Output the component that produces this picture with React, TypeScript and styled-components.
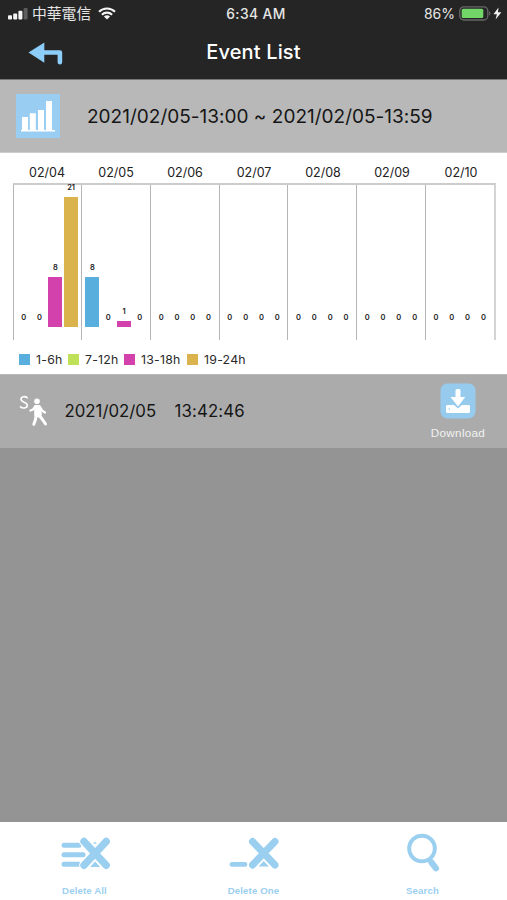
import React from "react";
import styled, { createGlobalStyle } from "styled-components";

const GlobalStyle = createGlobalStyle`
  * { box-sizing: border-box; }
  body { margin: 0; background: #949494; font-family: Inter, "Noto Sans CJK TC", sans-serif; }
`;

const BLUE = "#9bcff0";

const Screen = styled.div`
  width: 507px;
  height: 900px;
  display: flex;
  flex-direction: column;
  overflow: hidden;
  background: #949494;
`;

const StatusBar = styled.div`
  height: 28px;
  flex: none;
  display: grid;
  grid-template-columns: 1fr auto 1fr;
  align-items: center;
  padding: 0 5px 0 8px;
  background: #252525;
  color: #e6e6e6;
  white-space: nowrap;
`;

const StatusGroup = styled.div<{ $end?: boolean }>`
  display: flex;
  align-items: center;
  justify-content: ${(p) => (p.$end ? "flex-end" : "flex-start")};
`;

const Carrier = styled.span`
  font: 400 14.8px/26px "Noto Sans CJK TC", sans-serif;
  margin: 0 7px 2px 4px;
`;

const Clock = styled.span`
  font-size: 13.8px;
  font-weight: 500;
  letter-spacing: 0.4px;
  margin-left: 2px;
`;

const Percent = styled.span`
  font-size: 14px;
  line-height: 26px;
  margin: 0 4px 1px 0;
`;

const NavBar = styled.header`
  height: 51px;
  flex: none;
  display: grid;
  grid-template-columns: 90px 1fr 90px;
  align-items: center;
  padding-bottom: 3px;
  background: #252525;
`;

const BackButton = styled.button`
  border: 0;
  padding: 1px 0 0 28px;
  background: none;
  display: flex;
`;

const Title = styled.h1`
  margin: 0;
  color: #fff;
  font-size: 20px;
  font-weight: 500;
  letter-spacing: 0.15px;
  text-align: center;
`;

const Summary = styled.div`
  height: 74px;
  flex: none;
  display: flex;
  align-items: center;
  padding-left: 16px;
  gap: 27px;
  border-top: 1px solid #777;
  border-bottom: 1px solid #ccc;
  background: #b8b8b8;
  color: #151515;
  font-size: 19px;
  letter-spacing: 0.01px;
  white-space: nowrap;
`;

const ChartPanel = styled.section`
  height: 221px;
  flex: none;
  background: #fff;
  padding: 10px 11.5px 0 12.5px;
`;

const DayLabels = styled.div`
  display: grid;
  grid-template-columns: repeat(7, 1fr);
  height: 20px;
  line-height: 19px;
  font-size: 12.5px;
  text-align: center;
  color: #222;
`;

const Plot = styled.div`
  display: grid;
  grid-template-columns: repeat(7, 1fr);
  grid-template-rows: 100%;
  height: 157px;
  border-top: 2px solid #ccc;
  border-right: 2px solid #d4d4d4;
`;

const Day = styled.div`
  display: flex;
  align-items: flex-end;
  gap: 1.8px;
  padding: 0 0 13px 3.2px;
  border-left: 1px solid #b5b5b5;
`;

const Slot = styled.div`
  width: 14px;
  display: flex;
  flex-direction: column;
  align-items: center;
`;

const Value = styled.span`
  font: 600 7.5px/10px Inter, sans-serif;
  color: #222;
  margin-bottom: 4px;
`;

const Bar = styled.div<{ $color: string; $height: number }>`
  width: 14px;
  height: ${(p) => p.$height}px;
  background: ${(p) => p.$color};
`;

const Legend = styled.div`
  display: flex;
  align-items: center;
  height: 18px;
  margin: 10px 0 0 6.5px;
  font-size: 12.3px;
  letter-spacing: 0.25px;
  color: #2a2a2a;
`;

const LegendItem = styled.div<{ $width: number }>`
  display: flex;
  align-items: center;
  gap: 6px;
  width: ${(p) => p.$width}px;
  white-space: nowrap;
`;

const Swatch = styled.i<{ $color: string }>`
  width: 11px;
  height: 11px;
  background: ${(p) => p.$color};
`;

const EventRow = styled.div`
  height: 74px;
  flex: none;
  display: flex;
  align-items: center;
  padding: 0 17px 1px 19px;
  background: #ababab;
  border-top: 1px solid #b8b8b8;
  color: #151515;
  font-size: 16.8px;
`;

const EventDate = styled.span`
  width: 110px;
  margin-left: 16.500px;
`;

const EventTime = styled.span`
  flex: 1;
  letter-spacing: 0.15px;
`;

const DownloadButton = styled.button`
  border: 0;
  padding: 0;
  background: none;
  width: 64px;
  display: flex;
  flex-direction: column;
  align-items: center;
  gap: 7px;
  color: #f2f2f2;
  font: 400 11.7px/14px "Liberation Sans", sans-serif;
  letter-spacing: 0.3px;
`;

const Empty = styled.main`
  flex: 1;
`;

const Footer = styled.footer`
  height: 78px;
  flex: none;
  display: grid;
  grid-template-columns: repeat(3, 1fr);
  background: #fff;
`;

const FooterButton = styled.button`
  border: 0;
  padding: 9px 0 0;
  background: none;
  display: flex;
  flex-direction: column;
  align-items: center;
  gap: 9px;
  color: ${BLUE};
  font: 700 9.6px/14px "Liberation Sans", sans-serif;
  letter-spacing: 0.15px;
`;

const series = [
  { label: "1-6h", color: "#58aedd", width: 49 },
  { label: "7-12h", color: "#bfe157", width: 56 },
  { label: "13-18h", color: "#d341ad", width: 63 },
  { label: "19-24h", color: "#dbb34c", width: 66 },
];

const days = [
  { date: "02/04", counts: [0, 0, 8, 21] },
  { date: "02/05", counts: [8, 0, 1, 0] },
  { date: "02/06", counts: [0, 0, 0, 0] },
  { date: "02/07", counts: [0, 0, 0, 0] },
  { date: "02/08", counts: [0, 0, 0, 0] },
  { date: "02/09", counts: [0, 0, 0, 0] },
  { date: "02/10", counts: [0, 0, 0, 0] },
];

const SignalIcon = () => (
  <svg width="20" height="14" viewBox="0 0 20 14" fill="#f4f4f4">
    <rect x="0" y="8.2" width="4" height="4.3" rx="1" />
    <rect x="5.2" y="6.4" width="4" height="6.1" rx="1" />
    <rect x="10.4" y="3.8" width="4" height="8.7" rx="1" />
    <rect x="15.6" y="1" width="4" height="11.5" rx="1" fill="#5c5c5c" />
  </svg>
);

const WifiIcon = () => (
  <svg width="18" height="14" viewBox="0 0 18 14" fill="none" stroke="#f4f4f4" strokeWidth="2.2">
    <path d="M1 4.7a11.6 11.6 0 0 1 16 0" />
    <path d="M3.9 7.7a7.4 7.4 0 0 1 10.2 0" />
    <path d="M9 12.500 5.9 9.6a4.5 4.5 0 0 1 6.2 0Z" fill="#f4f4f4" stroke="none" />
  </svg>
);

const BatteryIcon = () => (
  <svg width="34" height="16" viewBox="0 0 34 16">
    <rect x="0.8" y="0.8" width="28" height="13.2" rx="4" fill="none" stroke="#666" strokeWidth="1.3" />
    <rect x="2.7" y="2.8" width="21.600" height="9.2" rx="1.5" fill="#72d568" />
    <path d="M30 5.3q3 2.2 0 4.4Z" fill="#666" />
  </svg>
);

const BoltIcon = () => (
  <svg width="9" height="14" viewBox="0 0 9 14" fill="#f2f2f2">
    <path d="M5.5 0.500 0.5 7.2h3.4L2.6 12.500 8.4 5.3H5Z" />
  </svg>
);

const BackIcon = () => (
  <svg width="36" height="24" viewBox="0 0 36 24">
    <path d="M0.5 11.5 16.3 1.4v20.4Z" fill="#8dcdfa" />
    <path d="M15 11.5h16.900v9.7" fill="none" stroke="#8dcdfa" strokeWidth="4.6" strokeLinejoin="round" strokeLinecap="round" />
  </svg>
);

const StatsIcon = () => (
  <svg width="44" height="44" viewBox="0 0 44 44">
    <rect width="44" height="44" fill="#9acdf2" />
    <path fill="#fff" d="M6 23h6v13.500h-6zM13.800 19.200h6v17.300h-6zM22 16h6v20.500h-6zM30 7h6v29.500h-6zM5 36h34v1.600h-34z" />
  </svg>
);

const MotionIcon = () => (
  <svg width="29" height="32" viewBox="0 0 29 32" fill="none" stroke="#fff" strokeLinecap="round" strokeLinejoin="round">
    <path d="M8.200 2.800C6.500 1 2 1.100 2 4.300C2 7.600 8.300 6.700 8.300 10.200C8.300 13.500 3.400 13.700 1.500 11.900" strokeWidth="1.600" />
    <circle cx="18" cy="6.200" r="2.800" fill="#fff" stroke="none" />
    <path d="M16.300 11h4l1.500 8.500-1.800 2-3.700-1.500Z" fill="#fff" strokeWidth="2.200" />
    <path d="M16.500 11.200 14 14.500 11.500 15.500M21 12 23.200 15.700 26 17.500" strokeWidth="2.300" />
    <path d="M17.200 20 16.500 24.500 14.800 29.300M20.300 20.500 23.500 24.500 26.500 29" strokeWidth="3" />
  </svg>
);

const DownloadIcon = () => (
  <svg width="36" height="36" viewBox="0 0 36 36">
    <rect x="0.500" y="0.500" width="35" height="35" rx="7" fill="#96cbee" />
    <path fill="#fff" d="M15.500 7.500q0-1.500 1.500-1.500h2q1.500 0 1.500 1.500v6.500h4.700L18 23.500 10.500 14h5z" />
    <path fill="#fff" d="M7.300 22h6.700l4 3.500 4-3.500h6.700q1.300 0 1.300 1.500v5q0 1.500-1.300 1.500H7.300Q6 30 6 28.500v-5Q6 22 7.300 22Z" />
    <circle cx="9.200" cy="26" r="0.800" fill="#96cbee" />
  </svg>
);

const DeleteAllIcon = () => (
  <svg width="52" height="44" viewBox="0 0 52 44" fill="none" stroke={BLUE} strokeLinecap="round">
    <path d="M5 14.300H20M5 23.800H24M5 33.300H20" strokeWidth="5" />
    <path d="M36 10.800 34 12.800h4Z" fill={BLUE} stroke="none" />
    <path d="M25 10.500 47.200 34.300M47.200 10.500 25 34.300" stroke="#fff" strokeWidth="9.800" />
    <path d="M36.100 30.500 31 36h10.200Z" fill={BLUE} stroke="none" />
    <path d="M25 10.500 47.200 34.300M47.200 10.500 25 34.300" strokeWidth="7.400" />
  </svg>
);

const DeleteOneIcon = () => (
  <svg width="52" height="44" viewBox="0 0 52 44" fill="none" stroke={BLUE} strokeLinecap="round">
    <path d="M4 33.400H17" strokeWidth="4.800" />
    <path d="M24.500 10.500 47 34M47 10.500 24.500 34" stroke="#fff" strokeWidth="9.800" />
    <path d="M35.700 30 30.500 35.600h10.400Z" fill={BLUE} stroke="none" />
    <path d="M24.500 10.500 47 34M47 10.500 24.500 34" strokeWidth="7" />
  </svg>
);

const SearchIcon = () => (
  <svg width="36" height="44" viewBox="0 0 36 44" fill="none" stroke={BLUE}>
    <circle cx="17" cy="17.500" r="12.800" strokeWidth="4" />
    <path d="M24 28 26.500 31" strokeWidth="4.500" />
    <path d="M26.500 31.500 31 37.300" strokeWidth="6.200" strokeLinecap="round" />
  </svg>
);

export default function App() {
  return (
    <Screen>
      <GlobalStyle />
      <StatusBar>
        <StatusGroup>
          <SignalIcon />
          <Carrier>中華電信</Carrier>
          <WifiIcon />
        </StatusGroup>
        <Clock>6:34 AM</Clock>
        <StatusGroup $end>
          <Percent>86%</Percent>
          <BatteryIcon />
          <BoltIcon />
        </StatusGroup>
      </StatusBar>
      <NavBar>
        <BackButton aria-label="Back">
          <BackIcon />
        </BackButton>
        <Title>Event List</Title>
      </NavBar>
      <Summary>
        <StatsIcon />
        <span>2021/02/05-13:00 ~ 2021/02/05-13:59</span>
      </Summary>
      <ChartPanel>
        <DayLabels>
          {days.map((d) => (
            <span key={d.date}>{d.date}</span>
          ))}
        </DayLabels>
        <Plot>
          {days.map((d) => (
            <Day key={d.date}>
              {d.counts.map((count, i) => (
                <Slot key={series[i].label}>
                  <Value>{count}</Value>
                  <Bar $color={series[i].color} $height={count * 6.2} />
                </Slot>
              ))}
            </Day>
          ))}
        </Plot>
        <Legend>
          {series.map((s) => (
            <LegendItem key={s.label} $width={s.width}>
              <Swatch $color={s.color} />
              {s.label}
            </LegendItem>
          ))}
        </Legend>
      </ChartPanel>
      <EventRow>
        <MotionIcon />
        <EventDate>2021/02/05</EventDate>
        <EventTime>13:42:46</EventTime>
        <DownloadButton>
          <DownloadIcon />
          Download
        </DownloadButton>
      </EventRow>
      <Empty />
      <Footer>
        <FooterButton>
          <DeleteAllIcon />
          Delete All
        </FooterButton>
        <FooterButton>
          <DeleteOneIcon />
          Delete One
        </FooterButton>
        <FooterButton>
          <SearchIcon />
          Search
        </FooterButton>
      </Footer>
    </Screen>
  );
}
